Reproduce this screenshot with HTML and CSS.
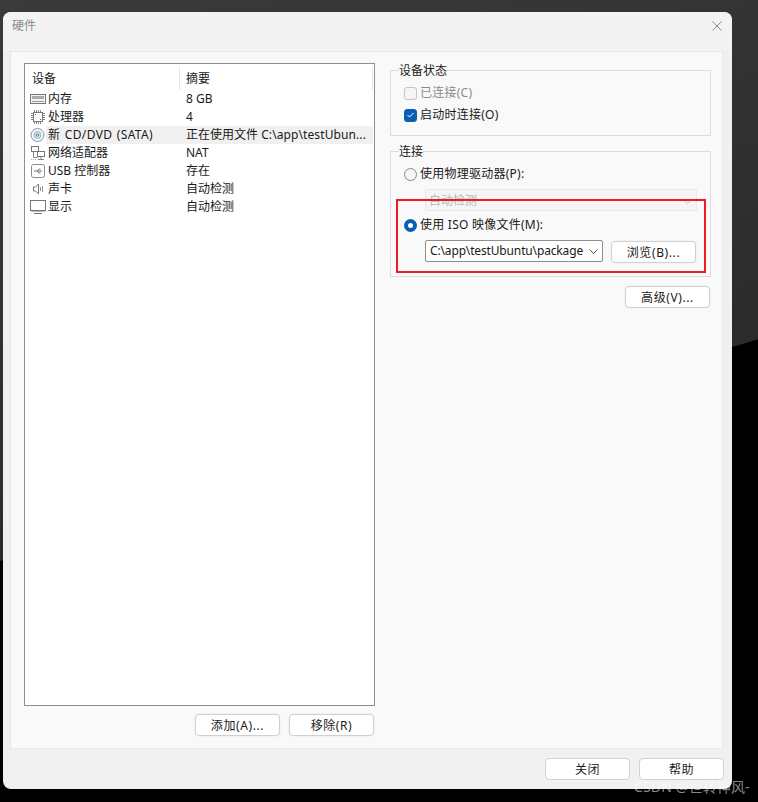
FILE: index.html
```html
<!DOCTYPE html>
<html lang="zh-CN">
<head>
<meta charset="utf-8">
<title>硬件</title>
<link rel="stylesheet" href="styles.css">
</head>
<body>
<div class="window">
  <div class="titlebar">
    <span class="title">硬件</span>
    <svg class="close" width="10" height="10" viewBox="0 0 10 10"><path d="M.5.5l9 9M9.500.5l-9 9" stroke="#8a8a8a" stroke-width="1" fill="none"/></svg>
  </div>
  <div class="panel">
    <div class="left">
      <div class="list">
        <div class="list-head">
          <span class="head-cell head-dev">设备</span>
          <span class="head-cell head-sum">摘要</span>
        </div>
        <div class="row">
          <svg class="ico" width="16" height="16" viewBox="0 0 16 16"><rect x=".5" y="3.500" width="15" height="9" fill="#f4f4f4" stroke="#777"/><rect x="2" y="5" width="12" height="3" fill="#aaa"/><path d="M2 10.500h12" stroke="#999"/></svg>
          <span class="dev">内存</span><span class="sum">8 GB</span>
        </div>
        <div class="row">
          <svg class="ico" width="16" height="16" viewBox="0 0 16 16"><rect x="3.500" y="3.500" width="9" height="9" fill="#fff" stroke="#777"/><path d="M4.500 1v2M6.500 1v2M8.500 1v2M10.500 1v2M4.500 13v2M6.500 13v2M8.500 13v2M10.500 13v2M1 4.500h2M1 6.500h2M1 8.500h2M1 10.500h2M13 4.500h2M13 6.500h2M13 8.500h2M13 10.500h2" stroke="#888"/><path d="M5 5h1v1H5zM10 10h1v1h-1z" fill="#555"/></svg>
          <span class="dev">处理器</span><span class="sum">4</span>
        </div>
        <div class="row selected">
          <svg class="ico" width="16" height="16" viewBox="0 0 16 16"><circle cx="7.500" cy="8" r="6.500" fill="#f2f8fc" stroke="#7f98a8"/><circle cx="7.500" cy="8" r="3.500" fill="#cfe0ea" stroke="#9bb"/><circle cx="7.500" cy="8" r="1.200" fill="#fff" stroke="#678"/></svg>
          <span class="dev dev-cd">新 CD/DVD (SATA)</span><span class="sum">正在使用文件 <span class="path">C:\app\testUbun...</span></span>
        </div>
        <div class="row">
          <svg class="ico" width="16" height="16" viewBox="0 0 16 16"><rect x="1.500" y="1.500" width="7" height="5" fill="#fff" stroke="#777"/><rect x="7.500" y="6.500" width="7" height="5" fill="#fff" stroke="#777"/><path d="M11 12v2M8 14.500h6M3.500 7v5.500h4" stroke="#888" fill="none"/><path d="M1 14.500h5" stroke="#aaa" stroke-dasharray="1 1"/></svg>
          <span class="dev">网络适配器</span><span class="sum">NAT</span>
        </div>
        <div class="row">
          <svg class="ico" width="16" height="16" viewBox="0 0 16 16"><rect x="1.500" y="1.500" width="13" height="13" rx="2" fill="#fff" stroke="#8a8a8a"/><path d="M4 8h8M7 8l2-2h1.500M7 8l2 2h1.500" stroke="#777" fill="none"/></svg>
          <span class="dev">USB 控制器</span><span class="sum">存在</span>
        </div>
        <div class="row">
          <svg class="ico" width="16" height="16" viewBox="0 0 16 16"><path d="M3.500 6h2l3-3v10l-3-3h-2z" fill="#fff" stroke="#777"/><path d="M10.500 6v4M12.500 5v6" stroke="#999"/></svg>
          <span class="dev">声卡</span><span class="sum">自动检测</span>
        </div>
        <div class="row">
          <svg class="ico" width="16" height="16" viewBox="0 0 16 16"><rect x=".5" y="1.500" width="15" height="10" fill="#fff" stroke="#777"/><path d="M1 12.500h14" stroke="#bbb"/><path d="M4 14.500h8" stroke="#777"/></svg>
          <span class="dev">显示</span><span class="sum">自动检测</span>
        </div>
      </div>
      <div class="list-actions">
        <button class="btn">添加(A)...</button>
        <button class="btn">移除(R)</button>
      </div>
    </div>
    <div class="right">
      <fieldset class="group group-status">
        <legend>设备状态</legend>
        <label class="opt disabled"><span class="check"></span>已连接(C)</label>
        <label class="opt"><span class="check on"><svg width="9" height="8" viewBox="0 0 9 8"><path d="M1.500 4l2 2L7.500 2" stroke="#fff" stroke-width="1" fill="none"/></svg></span>启动时连接(O)</label>
      </fieldset>
      <fieldset class="group group-conn">
        <legend>连接</legend>
        <label class="opt"><span class="radio"></span>使用物理驱动器(P):</label>
        <div class="combo combo-off">
          <span>自动检测</span>
          <svg width="9" height="5" viewBox="0 0 9 5"><path d="M.5.500l4 4 4-4" stroke="#c8c8c8" fill="none"/></svg>
        </div>
        <label class="opt opt-iso"><span class="radio on"></span>使用 ISO 映像文件(M):</label>
        <div class="iso-row">
          <div class="combo combo-iso">
            <span>C:\app\testUbuntu\package</span>
            <svg width="9" height="5" viewBox="0 0 9 5"><path d="M.5.500l4 4 4-4" stroke="#555" fill="none"/></svg>
          </div>
          <button class="btn">浏览(B)...</button>
        </div>
        <div class="mark"></div>
      </fieldset>
      <div class="advanced"><button class="btn">高级(V)...</button></div>
    </div>
  </div>
  <div class="footer">
    <button class="btn">关闭</button>
    <button class="btn">帮助</button>
  </div>
</div>
<div class="watermark">CSDN @世转神风-</div>
</body>
</html>
```
FILE: styles.css
```css
* { box-sizing: border-box; }
html, body { margin: 0; height: 100%; }
body {
  width: 758px;
  height: 802px;
  overflow: hidden;
  position: relative;
  padding: 12px 26px 13px 3px;
  font: 12px/18px "Noto Sans", "Noto Sans CJK SC", sans-serif;
  color: #1a1a1a;
  background: linear-gradient(163.7deg, #3a3a3a 0, #2b2b2b 538px, #000 539px);
}
.window {
  height: 777px;
  display: flex;
  flex-direction: column;
  background: #f0f0f0;
  border-radius: 8px;
}
.titlebar {
  height: 39px;
  flex: none;
  padding: 0 10px 0 9px;
  display: flex;
  align-items: flex-start;
  justify-content: space-between;
  background: #f3f3f3;
  border-radius: 8px 8px 0 0;
}
.title { color: #8c8c8c; margin-top: 5px; }
.close { margin-top: 9px; }
.panel {
  height: 698px;
  flex: none;
  margin: 0 9px 0 7px;
  padding: 11px 12px 0 13px;
  display: flex;
  gap: 15px;
  background: #f9f9f9;
  border: 1px solid #e8e8e8;
}
.left { width: 351px; flex: none; }
.list {
  height: 643px;
  background: #fff;
  border: 1px solid #8a8f99;
}
.list-head { display: flex; height: 26px; padding-top: 3px; }
.head-cell { height: 23px; line-height: 23px; }
.head-dev { width: 155px; padding-left: 7px; border-right: 1px solid #e4e4e4; }
.head-sum { flex: 1; padding-left: 6px; border-right: 1px solid #e4e4e4; margin-right: 1px; }
.row {
  height: 18px;
  margin-right: 1px;
  padding-left: 5px;
  display: flex;
  align-items: center;
  white-space: nowrap;
  position: relative;
}
.ico { flex: none; margin-right: 1px; }
.dev { width: 139px; flex: none; padding-left: 1px; }
.dev-cd { letter-spacing: .35px; word-spacing: 1px; }
.path { letter-spacing: .1px; word-spacing: 0; }
.selected { background: linear-gradient(to right, #fff 21px, #f0f0f0 21px); }
.list-actions {
  display: flex;
  justify-content: flex-end;
  gap: 9px;
  margin-top: 8px;
  padding-right: 1px;
}
.btn {
  width: 85px;
  height: 22px;
  padding: 1px 0 0;
  font: inherit;
  line-height: 19px;
  letter-spacing: .6px;
  color: #1a1a1a;
  background: #fff;
  border: 1px solid #d0d0d0;
  border-radius: 4px;
  box-shadow: 0 0 0 1px #f3f3f3;
}
.right { width: 321px; flex: none; }
.group {
  margin: 0;
  padding: 4px 0 0 13px;
  border: 1px solid #dcdcdc;
  position: relative;
}
.group legend { padding: 1px 0 0; margin-left: -5px; line-height: 14px; }
.group-status { height: 73px; }
.group-conn { height: 133px; margin-top: 8px; }
.opt { display: flex; align-items: center; gap: 3px; height: 22px; white-space: nowrap; letter-spacing: .25px; }
.opt.disabled { color: #8a8a8a; }
.check, .radio {
  width: 13px;
  height: 13px;
  flex: none;
  border: 1px solid #8a8a8a;
  background: #f6f6f6;
  display: flex;
  align-items: center;
  justify-content: center;
}
.check { border-radius: 3px; }
.disabled .check { border-color: #c4c4c4; }
.check.on { background: #0a5fb4; border-color: #0a5fb4; }
.radio { border-radius: 50%; }
.radio.on { background: #fff; border: 4px solid #0a5fb4; }
.combo {
  height: 22px;
  display: flex;
  align-items: center;
  justify-content: space-between;
  padding: 0 4px 0 4px;
  border-radius: 2px;
}
.combo-off {
  width: 272px;
  margin: 4px 0 0 21px;
  padding: 2px 4px 0 3px;
  color: #b8b8b8;
  background: #f5f5f5;
  border: 1px solid #e8e8e8;
}
.opt-iso { margin-top: 3px; }
.iso-row { display: flex; gap: 8px; margin: 4px 0 0 21px; align-items: flex-start; }
.combo-iso { width: 178px; background: #fff; border: 1px solid #8e8e8e; letter-spacing: -.15px; }
.iso-row .btn { margin-top: 1px; }
.mark {
  position: absolute;
  left: 5px;
  top: 40px;
  width: 310px;
  height: 74px;
  border: 2px solid #ed1c24;
}
.advanced { display: flex; justify-content: flex-end; margin-top: 9px; padding-right: 1px; }
.footer {
  flex: 1;
  display: flex;
  justify-content: flex-end;
  gap: 9px;
  padding: 9px 8px 0 0;
}
.watermark {
  position: absolute;
  left: 634px;
  top: 778px;
  color: rgba(255,255,255,.55);
  white-space: nowrap;
  font-size: 14px;
  letter-spacing: .15px;
}
```
